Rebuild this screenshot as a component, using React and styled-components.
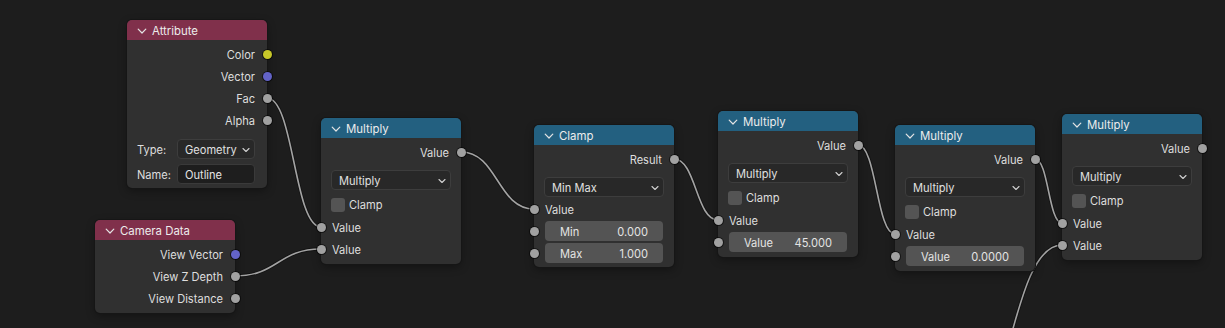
import React from 'react'
import styled, { createGlobalStyle } from 'styled-components'

const GlobalStyle = createGlobalStyle`
  html, body {
    margin: 0;
    padding: 0;
    background: #1d1d1d;
  }
`

const SOCKET = {
  gray: '#a1a1a1',
  yellow: '#c7c729',
  purple: '#6363c7',
}

const HEADER = {
  input: '#80304b',
  converter: '#236080',
}

// socket positions on the canvas, used for the wires
const wires = [
  [[267, 98], [321, 227]],
  [[235, 276], [321, 249]],
  [[461, 152], [534, 209]],
  [[674, 159], [718, 220]],
  [[858, 145], [895, 234]],
  [[1035, 159], [1062, 223]],
  [[955, 445], [1062, 245]],
]

const wirePath = ([x1, y1], [x2, y2]) => {
  const d = Math.abs(x2 - x1) * 0.5
  return `M${x1} ${y1} C${x1 + d} ${y1}, ${x2 - d} ${y2}, ${x2} ${y2}`
}

class App extends React.Component {
  render() {
    return (
      <>
        <GlobalStyle />
        <Canvas>
          <Wires width="1225" height="328" viewBox="0 0 1225 328">
            {wires.map((w, i) => (
              <g key={i}>
                <path d={wirePath(w[0], w[1])} stroke="rgba(0,0,0,0.35)" strokeWidth="3.4" fill="none" />
                <path d={wirePath(w[0], w[1])} stroke="#a3a3a3" strokeWidth="1.6" fill="none" />
              </g>
            ))}
          </Wires>

          <Node x={127} y={20} title="Attribute" color={HEADER.input}>
            <Out label="Color" color={SOCKET.yellow} />
            <Out label="Vector" color={SOCKET.purple} />
            <Out label="Fac" />
            <Out label="Alpha" />
            <PropGrid>
              <PropLabel>Type:</PropLabel>
              <Select $inline>
                <span>Geometry</span>
                <Caret />
              </Select>
              <PropLabel>Name:</PropLabel>
              <TextField>Outline</TextField>
            </PropGrid>
          </Node>

          <Node x={95} y={220} title="Camera Data" color={HEADER.input}>
            <Out label="View Vector" color={SOCKET.purple} />
            <Out label="View Z Depth" />
            <Out label="View Distance" />
          </Node>

          <MathNode x={321} y={118} />

          <Node x={534} y={125} title="Clamp" color={HEADER.converter} $pb={3}>
            <Out label="Result" />
            <Select>
              <span>Min Max</span>
              <Caret />
            </Select>
            <In label="Value" $mt={1} />
            <FieldIn label="Min" value="0.000" />
            <FieldIn label="Max" value="1.000" />
          </Node>

          <MathNode x={718} y={111} field="45.000" />
          <MathNode x={895} y={125} field="0.0000" />
          <MathNode x={1062} y={114} />
        </Canvas>
      </>
    )
  }
}

export default App

const Node = ({ x, y, title, color, children, $pb }) => (
  <NodeBox $x={x} $y={y} $pb={$pb}>
    <Header $color={color}>
      <svg width="10" height="10" viewBox="0 0 10 10">
        <path d="M1.2 3.2 L5 7 L8.8 3.2" stroke="#e4e4e4" strokeWidth="1.2" fill="none" strokeLinecap="round" strokeLinejoin="round" />
      </svg>
      <span>{title}</span>
    </Header>
    <Body>{children}</Body>
  </NodeBox>
)

const MathNode = ({ x, y, field }) => (
  <Node x={x} y={y} title="Multiply" color={HEADER.converter}>
    <Out label="Value" />
    <Select>
      <span>Multiply</span>
      <Caret />
    </Select>
    <CheckRow>
      <Check />
      <span>Clamp</span>
    </CheckRow>
    <In label="Value" />
    {field ? <FieldIn label="Value" value={field} /> : <In label="Value" />}
  </Node>
)

const Out = ({ label, color = SOCKET.gray }) => (
  <Row $out>
    <span>{label}</span>
    <Socket $out $color={color} />
  </Row>
)

const In = ({ label, color = SOCKET.gray, $mt }) => (
  <Row $mt={$mt}>
    <Socket $color={color} />
    <span>{label}</span>
  </Row>
)

const FieldIn = ({ label, value }) => (
  <Row $field>
    <Socket $color={SOCKET.gray} />
    <NumField>
      <span>{label}</span>
      <span>{value}</span>
    </NumField>
  </Row>
)

const Caret = () => (
  <svg width="8" height="6" viewBox="0 0 8 6">
    <path d="M1 1.5 L4 4.5 L7 1.5" stroke="#d0d0d0" strokeWidth="1.1" fill="none" strokeLinecap="round" strokeLinejoin="round" />
  </svg>
)

const Canvas = styled.div`
  position: relative;
  width: 1225px;
  height: 328px;
  overflow: hidden;
  background: #1d1d1d;
  font-family: Inter, "Noto Sans", sans-serif;
  font-size: 11.1px;
  color: #dedede;
`

const Wires = styled.svg`
  position: absolute;
  left: 0;
  top: 0;
  pointer-events: none;
`

const NodeBox = styled.div`
  position: absolute;
  left: ${p => p.$x}px;
  top: ${p => p.$y}px;
  width: 140px;
  background: #303030;
  border-radius: 5px;
  box-shadow: 0 0 0 1px #161616, 0 3px 8px rgba(0, 0, 0, 0.35);
  padding-bottom: ${p => (p.$pb != null ? p.$pb : 4)}px;
`

const Header = styled.div`
  height: 20px;
  box-sizing: border-box;
  padding-top: 1px;
  display: flex;
  align-items: center;
  gap: 5px;
  padding-left: 10px;
  background: ${p => p.$color};
  border-radius: 5px 5px 0 0;
  color: #ececec;
  font-size: 11.4px;
  svg {
    flex: none;
  }
`

const Body = styled.div`
  display: flex;
  flex-direction: column;
  padding-top: 3px;
`

const Row = styled.div`
  position: relative;
  height: 22px;
  box-sizing: border-box;
  padding-top: ${p => (p.$field ? 0 : 2)}px;
  margin-top: ${p => p.$mt || 0}px;
  display: flex;
  align-items: center;
  justify-content: ${p => (p.$out ? 'flex-end' : 'flex-start')};
  padding-right: ${p => (p.$out ? 12 : p.$field ? 11 : 0)}px;
  padding-left: ${p => (p.$out ? 0 : 11)}px;
`

const Socket = styled.span`
  position: absolute;
  top: 50%;
  ${p => (p.$out ? 'right: -4.5px;' : 'left: -4.5px;')}
  width: 9px;
  height: 9px;
  margin-top: -4.5px;
  border-radius: 50%;
  background: ${p => p.$color};
  box-shadow: 0 0 0 1px rgba(0, 0, 0, 0.55);
`

const Select = styled.div`
  height: 20px;
  box-sizing: border-box;
  margin: ${p => (p.$inline ? '0' : '7px 10px 0')};
  display: flex;
  align-items: center;
  justify-content: space-between;
  padding: 1px 4px 0 7px;
  background: #282828;
  border: 1px solid #3d3d3d;
  border-radius: 4px;
  color: #e0e0e0;
`

const CheckRow = styled.div`
  height: 23px;
  margin-top: 3px;
  display: flex;
  align-items: center;
  gap: 4px;
  padding-left: 10px;
`

const Check = styled.span`
  width: 14px;
  height: 14px;
  border-radius: 3px;
  background: #545454;
`

const NumField = styled.div`
  flex: 1;
  height: 20px;
  box-sizing: border-box;
  display: flex;
  align-items: center;
  justify-content: space-between;
  padding: 1px 15px 0;
  background: #545454;
  border-radius: 4px;
  color: #e4e4e4;
`

const PropGrid = styled.div`
  display: grid;
  grid-template-columns: 40px 1fr;
  grid-auto-rows: 20px;
  row-gap: 5px;
  align-items: center;
  padding: 0 12px 0 10px;
  margin-top: 8px;
`

const PropLabel = styled.span`
  color: #dedede;
  padding-top: 1px;
`

const TextField = styled.div`
  height: 20px;
  box-sizing: border-box;
  display: flex;
  align-items: center;
  padding: 1px 0 0 7px;
  background: #1e1e1e;
  border: 1px solid #3a3a3a;
  border-radius: 4px;
  color: #e4e4e4;
`
